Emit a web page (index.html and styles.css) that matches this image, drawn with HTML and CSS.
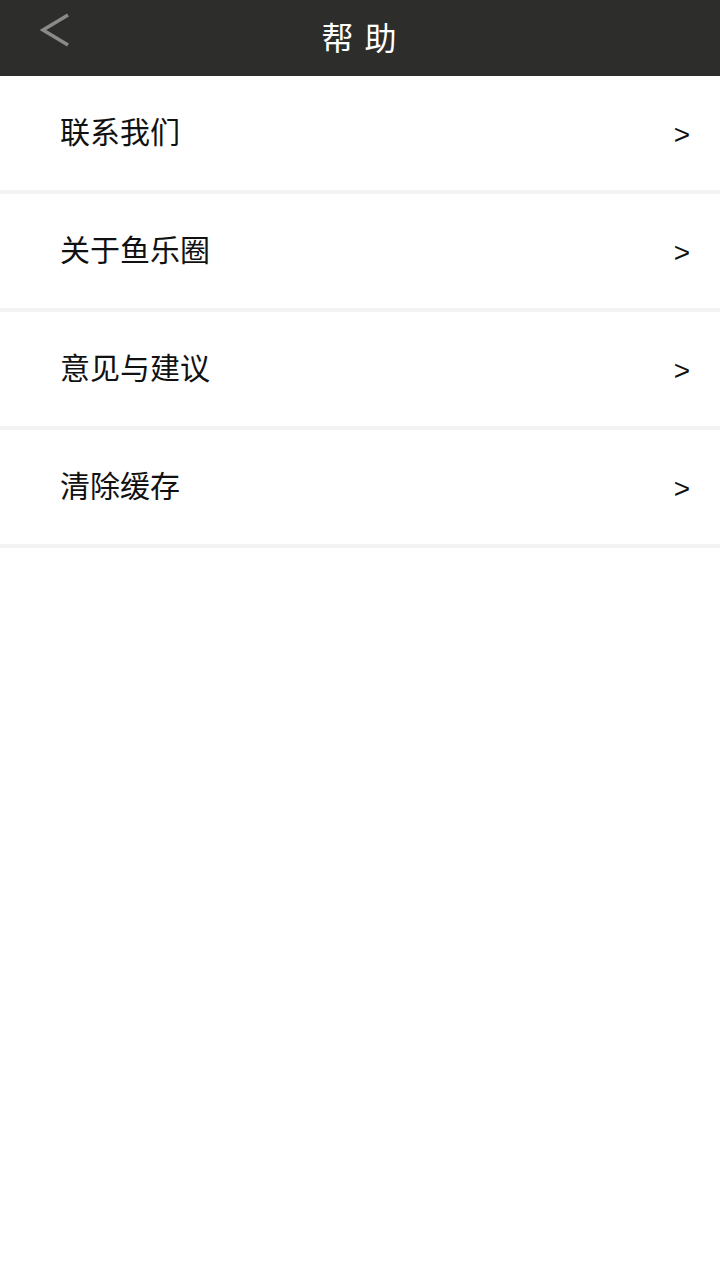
FILE: index.html
```html
<!DOCTYPE html>
<html>
    <head>
        <title>帮助</title>
        <meta charset="utf-8">
        <link rel="stylesheet" href="styles.css">
    </head>
    <body>
        <div class="header">
            <a href="" class="back">
                <svg width="40" height="40" viewBox="0 0 40 40">
                    <polyline points="28,4 3,19 28,34" fill="none" stroke="#8a8a8a" stroke-width="3.5"/>
                </svg>
            </a>
            <div class="title">帮 助</div>
        </div>
        <ul class="menu">
            <li class="menu-item"><span class="label">联系我们</span><span class="arrow">&gt;</span></li>
            <li class="menu-item"><span class="label">关于鱼乐圈</span><span class="arrow">&gt;</span></li>
            <li class="menu-item"><span class="label">意见与建议</span><span class="arrow">&gt;</span></li>
            <li class="menu-item"><span class="label">清除缓存</span><span class="arrow">&gt;</span></li>
        </ul>
    </body>
</html>
```
FILE: styles.css
```css
body {
  margin: 0;
  background: #fff;
  font-family: "Noto Sans CJK SC", "Noto Sans", sans-serif;
}

.header {
  height: 76px;
  background: #2d2d2b;
  display: flex;
  align-items: center;
  justify-content: center;
  position: relative;
}

.back {
  position: absolute;
  left: 40px;
  top: 11px;
  display: block;
  width: 40px;
  height: 40px;
}

.title {
  color: #fff;
  font-size: 32px;
  letter-spacing: 2px;
  margin-bottom: 4px;
}

.menu {
  list-style: none;
  margin: 0;
  padding: 0;
}

.menu-item {
  height: 114px;
  border-bottom: 4px solid #f3f3f3;
  display: flex;
  align-items: center;
  justify-content: space-between;
  padding: 0 30px 0 60px;
  font-size: 30px;
  color: #111;
}

.label {
  margin-bottom: 6px;
}

.arrow {
  font-family: "Liberation Sans", sans-serif;
  font-size: 28px;
  padding-top: 4px;
}
```
